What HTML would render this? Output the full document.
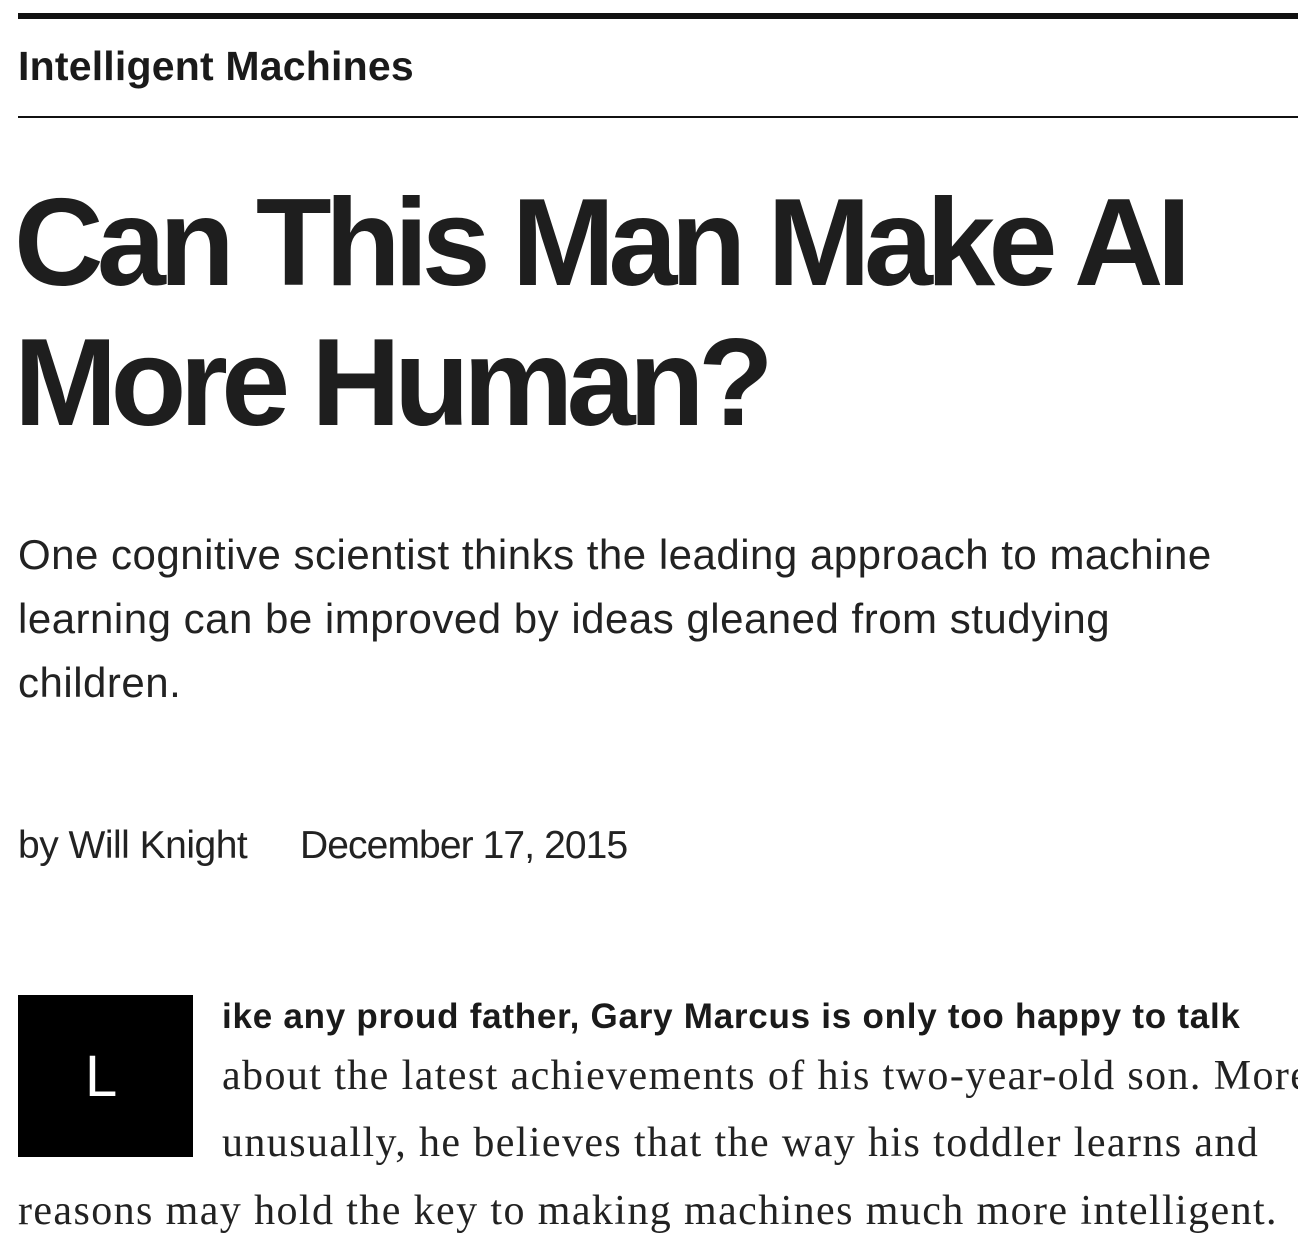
<!DOCTYPE html>
<html><head><meta charset="utf-8"><style>
html,body{margin:0;padding:0;background:#fff;width:1298px;height:1250px;overflow:hidden;position:relative;color:#222}
.a{position:absolute;white-space:nowrap;line-height:1}
.s{font-family:"Liberation Sans",sans-serif}
.r{font-family:"Liberation Serif",serif}
</style></head><body>
<div class="a" style="left:18px;top:13px;width:1280px;height:6px;background:#111"></div>
<div class="a s" style="left:18px;top:46px;font-size:41px;font-weight:bold;letter-spacing:0.2px;color:#1a1a1a">Intelligent Machines</div>
<div class="a" style="left:18px;top:116px;width:1280px;height:2px;background:#111"></div>
<div class="a s" style="left:14px;top:173px;font-size:124px;font-weight:bold;letter-spacing:-6.7px;line-height:140px;color:#1e1e1e">Can This Man Make AI<br>More Human?</div>
<div class="a s" style="left:18px;top:523px;font-size:42px;letter-spacing:0.5px;line-height:64px;color:#222">One cognitive scientist thinks the leading approach to machine<br>learning can be improved by ideas gleaned from studying<br>children.</div>
<div class="a s" style="left:18px;top:826px;font-size:39px;letter-spacing:-0.5px;color:#222">by Will Knight</div>
<div class="a s" style="left:300px;top:826px;font-size:39px;letter-spacing:-0.9px;color:#222">December 17, 2015</div>
<div class="a" style="left:18px;top:995px;width:175px;height:162px;background:#000"></div>
<div class="a s" style="left:85px;top:1048px;font-size:58px;color:#fff">L</div>
<div class="a s" style="left:222px;top:999px;font-size:35px;font-weight:bold;letter-spacing:0.75px;color:#1a1a1a">ike any proud father, Gary Marcus is only too happy to talk</div>
<div class="a r" style="left:222px;top:1055px;font-size:42px;letter-spacing:1.4px;color:#222">about the latest achievements of his two-year-old son. More</div>
<div class="a r" style="left:222px;top:1122px;font-size:42px;letter-spacing:1.4px;color:#222">unusually, he believes that the way his toddler learns and</div>
<div class="a r" style="left:18px;top:1190px;font-size:42px;letter-spacing:1.4px;color:#222">reasons may hold the key to making machines much more intelligent.</div>
</body></html>
